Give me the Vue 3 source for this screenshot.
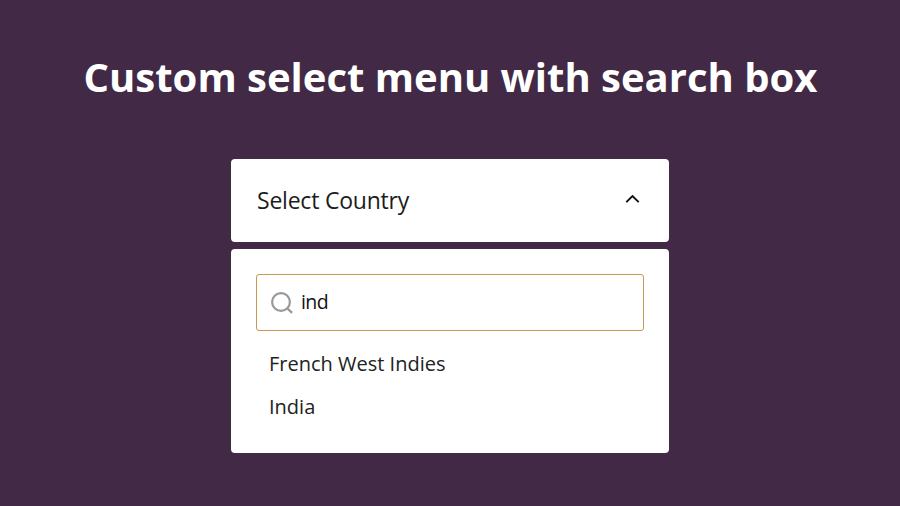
<script setup>
import { ref, computed } from 'vue'

const query = ref('ind')
const open = ref(true)
const selected = ref('Select Country')
const countries = ['French West Indies', 'India', 'Japan', 'Norway']
const matches = computed(() =>
  countries.filter((c) => c.toLowerCase().includes(query.value.toLowerCase()))
)
function choose(country) {
  selected.value = country
  open.value = false
}
</script>

<template>
  <main class="page">
    <h1 class="title">Custom select menu with search box</h1>
    <div class="select">
      <button class="trigger" type="button" @click="open = !open">
        <span class="label">{{ selected }}</span>
        <svg class="chevron" viewBox="0 0 16 10" width="16" height="10">
          <path d="M2.3 8.1 L8.5 2.1 L14.7 8.1" fill="none" stroke="#111" stroke-width="2" />
        </svg>
      </button>
      <div v-if="open" class="panel">
        <label class="search">
          <svg class="glass" viewBox="0 0 24 24" width="24" height="24">
            <circle cx="11" cy="11" r="8.9" fill="none" stroke="#999" stroke-width="2.2" />
            <path d="M17 17 L22 21.8" stroke="#999" stroke-width="2.3" />
          </svg>
          <input v-model="query" class="input" type="text" />
        </label>
        <ul class="list">
          <li v-for="c in matches" :key="c" class="item" @click="choose(c)">{{ c }}</li>
        </ul>
      </div>
    </div>
  </main>
</template>

<style>
body {
  background: #422946;
}
</style>

<style scoped>
.page {
  box-sizing: border-box;
  height: 506px;
  padding-top: 50px;
  display: flex;
  flex-direction: column;
  align-items: center;
  background: #422946;
  font-family: "Open Sans", sans-serif;
}
.title {
  margin: 0;
  padding-left: 1px;
  font-size: 40px;
  line-height: 54px;
  font-weight: 700;
  color: #fff;
  white-space: nowrap;
}
.select {
  width: 438px;
  margin-top: 55px;
  display: flex;
  flex-direction: column;
  gap: 7px;
}
.trigger {
  box-sizing: border-box;
  height: 83px;
  padding: 0 29px 2px 26px;
  display: flex;
  align-items: center;
  justify-content: space-between;
  border: 0;
  border-radius: 4px;
  background: #fff;
  font: 400 23px/32px "Open Sans", sans-serif;
  letter-spacing: -0.22px;
  color: #1c1c1c;
}
.chevron {
  margin-bottom: 2px;
}
.panel {
  box-sizing: border-box;
  height: 204px;
  padding: 25px;
  border-radius: 4px;
  background: #fff;
}
.search {
  box-sizing: border-box;
  height: 57px;
  padding: 0 13px;
  display: flex;
  align-items: center;
  gap: 7px;
  border: 1px solid #c49a54;
  border-radius: 3px;
}
.input {
  flex: 1;
  min-width: 0;
  padding: 0 0 2px;
  border: 0;
  outline: 0;
  background: none;
  font: 400 19.5px/26px "Open Sans", sans-serif;
  letter-spacing: -0.6px;
  color: #111;
}
.list {
  margin: 11px 0 0;
  padding: 0 13px;
  list-style: none;
}
.item {
  font-size: 20px;
  line-height: 43px;
  color: #222;
}
</style>
